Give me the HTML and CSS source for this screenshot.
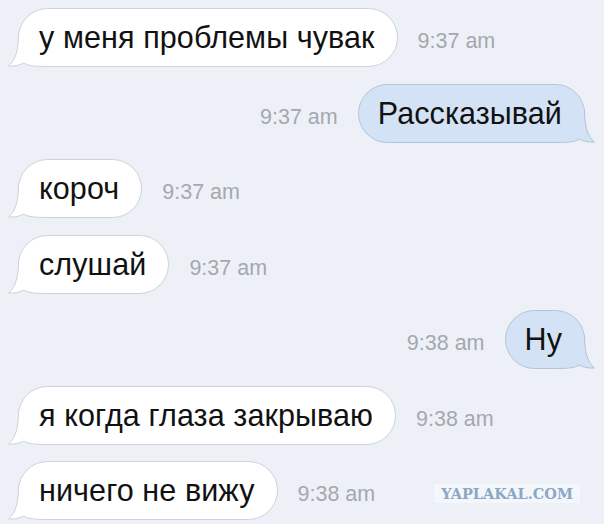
FILE: index.html
```html
<!DOCTYPE html>
<html lang="ru">
<head>
  <meta charset="UTF-8">
  <meta name="viewport" content="width=device-width, initial-scale=1.0">
  <title>Переписка</title>
  <link rel="stylesheet" href="styles.css">
</head>
<body>
  <div class="chat">
    <!-- входящее -->
    <div class="row in">
      <div class="bubble">
        <span class="msg">у меня проблемы чувак</span>
        <svg class="tail" viewBox="0 0 42 34" width="42" height="34"><path class="tail-fill" d="M11.5 0 C11.5 16 9 27 1.5 33 C8 33.5 13 32 17 30 C21 33 28 33.5 42 33.5 L42 0 Z"/><path class="tail-line" d="M11.5 0 C11.5 16 9 27 1.5 33 C8 33.5 13 32 17 30 C21 33 28 33.5 42 33.5"/></svg>
      </div>
      <span class="time">9:37 am</span>
    </div>

    <!-- исходящее -->
    <div class="row out">
      <span class="time">9:37 am</span>
      <div class="bubble">
        <span class="msg">Рассказывай</span>
        <svg class="tail" viewBox="0 0 42 34" width="42" height="34"><path class="tail-fill" d="M11.5 0 C11.5 16 9 27 1.5 33 C8 33.5 13 32 17 30 C21 33 28 33.5 42 33.5 L42 0 Z"/><path class="tail-line" d="M11.5 0 C11.5 16 9 27 1.5 33 C8 33.5 13 32 17 30 C21 33 28 33.5 42 33.5"/></svg>
      </div>
    </div>

    <div class="row in">
      <div class="bubble">
        <span class="msg">короч</span>
        <svg class="tail" viewBox="0 0 42 34" width="42" height="34"><path class="tail-fill" d="M11.5 0 C11.5 16 9 27 1.5 33 C8 33.5 13 32 17 30 C21 33 28 33.5 42 33.5 L42 0 Z"/><path class="tail-line" d="M11.5 0 C11.5 16 9 27 1.5 33 C8 33.5 13 32 17 30 C21 33 28 33.5 42 33.5"/></svg>
      </div>
      <span class="time">9:37 am</span>
    </div>

    <div class="row in">
      <div class="bubble">
        <span class="msg">слушай</span>
        <svg class="tail" viewBox="0 0 42 34" width="42" height="34"><path class="tail-fill" d="M11.5 0 C11.5 16 9 27 1.5 33 C8 33.5 13 32 17 30 C21 33 28 33.5 42 33.5 L42 0 Z"/><path class="tail-line" d="M11.5 0 C11.5 16 9 27 1.5 33 C8 33.5 13 32 17 30 C21 33 28 33.5 42 33.5"/></svg>
      </div>
      <span class="time">9:37 am</span>
    </div>

    <div class="row out">
      <span class="time">9:38 am</span>
      <div class="bubble">
        <span class="msg">Ну</span>
        <svg class="tail" viewBox="0 0 42 34" width="42" height="34"><path class="tail-fill" d="M11.5 0 C11.5 16 9 27 1.5 33 C8 33.5 13 32 17 30 C21 33 28 33.5 42 33.5 L42 0 Z"/><path class="tail-line" d="M11.5 0 C11.5 16 9 27 1.5 33 C8 33.5 13 32 17 30 C21 33 28 33.5 42 33.5"/></svg>
      </div>
    </div>

    <div class="row in">
      <div class="bubble">
        <span class="msg">я когда глаза закрываю</span>
        <svg class="tail" viewBox="0 0 42 34" width="42" height="34"><path class="tail-fill" d="M11.5 0 C11.5 16 9 27 1.5 33 C8 33.5 13 32 17 30 C21 33 28 33.5 42 33.5 L42 0 Z"/><path class="tail-line" d="M11.5 0 C11.5 16 9 27 1.5 33 C8 33.5 13 32 17 30 C21 33 28 33.5 42 33.5"/></svg>
      </div>
      <span class="time">9:38 am</span>
    </div>

    <div class="row in">
      <div class="bubble">
        <span class="msg">ничего не вижу</span>
        <svg class="tail" viewBox="0 0 42 34" width="42" height="34"><path class="tail-fill" d="M11.5 0 C11.5 16 9 27 1.5 33 C8 33.5 13 32 17 30 C21 33 28 33.5 42 33.5 L42 0 Z"/><path class="tail-line" d="M11.5 0 C11.5 16 9 27 1.5 33 C8 33.5 13 32 17 30 C21 33 28 33.5 42 33.5"/></svg>
      </div>
      <span class="time">9:38 am</span>
    </div>
  </div>

  <div class="watermark">YAPLAKAL.COM</div>
</body>
</html>
```

FILE: styles.css
```css
/* Цвета */
:root {
  --bg: #edf1f7;
  --in-bg: #ffffff;
  --in-border: #cdd2d9;
  --out-bg: #d4e2f5;
  --out-border: #b4c4d8;
  --time: #a4a8af;
  --text: #111;
}

* {
  box-sizing: border-box;
  margin: 0;
  padding: 0;
}

html, body {
  height: 100%;
}

body {
  background: var(--bg);
  font-family: 'Liberation Sans', Arial, sans-serif;
  color: var(--text);
  position: relative;
  overflow: hidden;
}

.chat {
  display: flex;
  flex-direction: column;
  gap: 16.5px;
  padding-top: 8px;
}

.row {
  display: flex;
  align-items: baseline;
  gap: 20px;
}
.row.in {
  padding-left: 18px;
}
.row.out {
  justify-content: flex-end;
  padding-right: 19px;
}

/* Пузырь сообщения */
.bubble {
  position: relative;
  height: 59px;
  padding: 0 22px 0 20px;
  border: 1px solid var(--in-border);
  border-radius: 30px;
  background: var(--in-bg);
  font-size: 30.5px;
  letter-spacing: 0.1px;
  line-height: 57px;
  white-space: nowrap;
}
.out .bubble {
  background: var(--out-bg);
  border-color: var(--out-border);
  padding: 0 22px 0 19px;
}

.msg {
  position: relative;
  z-index: 1;
}

/* Хвостик */
.tail {
  position: absolute;
  left: -12px;
  bottom: -1px;
  display: block;
}
.out .tail {
  left: auto;
  right: -12px;
  transform: scaleX(-1);
}
.tail-fill {
  fill: var(--in-bg);
}
.tail-line {
  fill: none;
  stroke: var(--in-border);
  stroke-width: 1;
}
.out .tail-fill {
  fill: var(--out-bg);
}
.out .tail-line {
  stroke: var(--out-border);
}

.time {
  font-size: 21.5px;
  color: var(--time);
  white-space: nowrap;
}

/* Водяной знак поверх картинки */
.watermark {
  position: absolute;
  right: 24px;
  bottom: 21px;
  padding: 1px 7px;
  background: #f3f6fa;
  color: #8ba7c4;
  font-family: 'DejaVu Serif', serif;
  font-weight: bold;
  font-size: 14.5px;
  letter-spacing: 0;
}
```
